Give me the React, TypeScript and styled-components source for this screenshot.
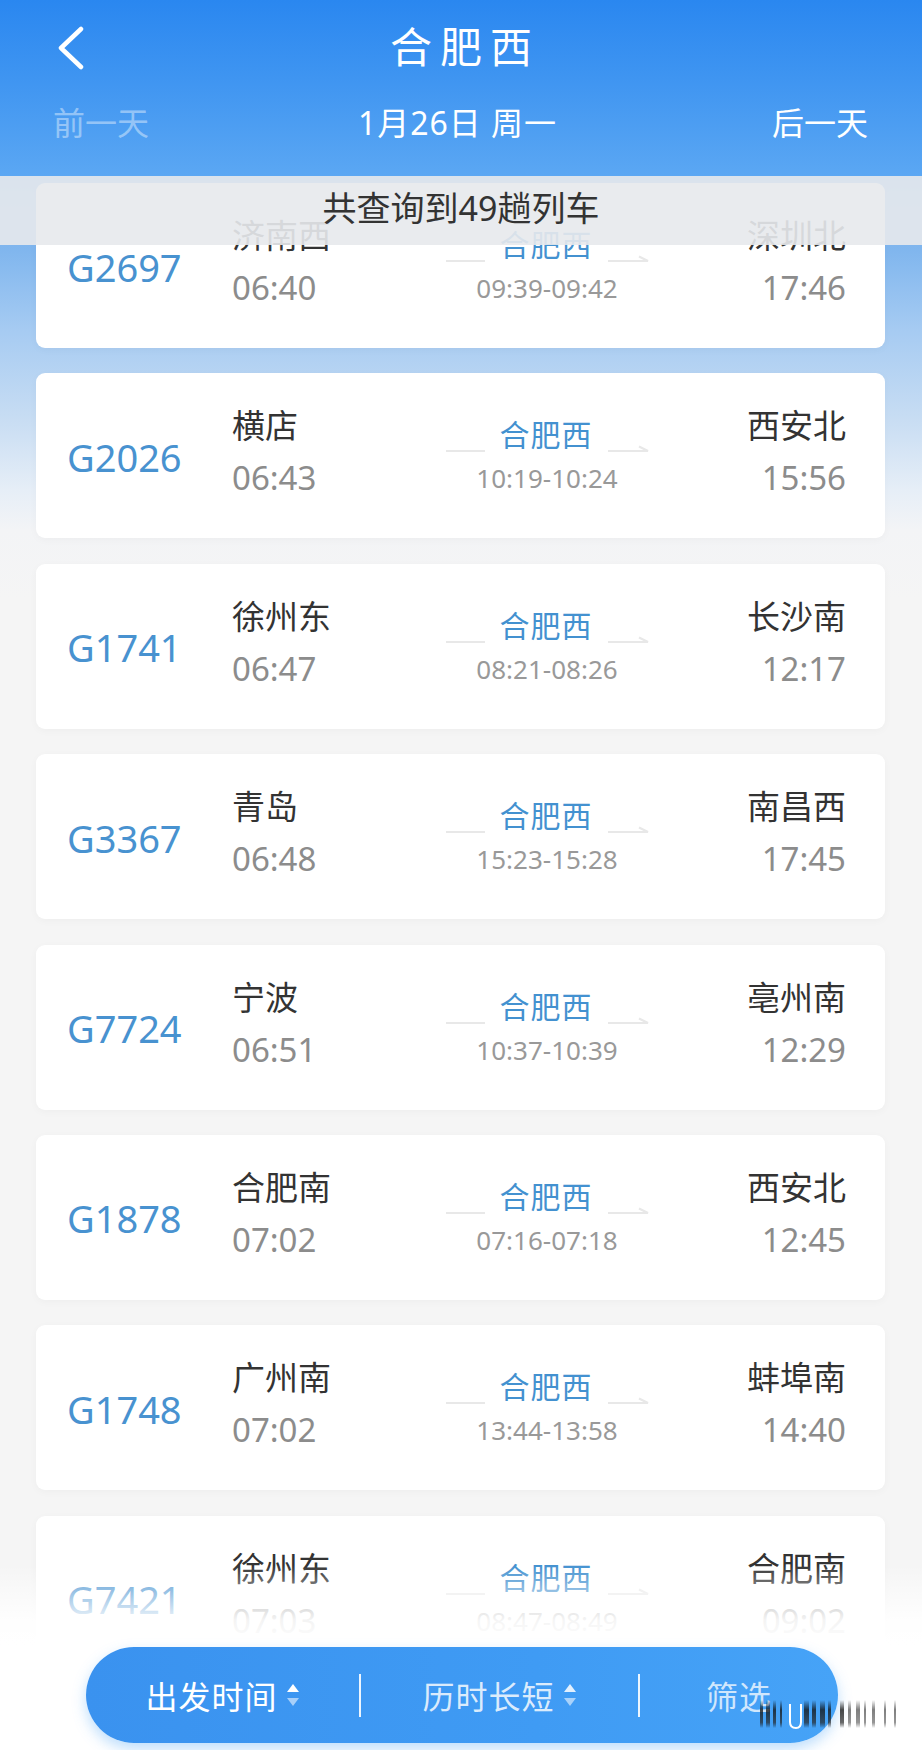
import React from "react";
import styled, { createGlobalStyle } from "styled-components";

const GlobalStyle = createGlobalStyle`
  body {
    margin: 0;
    background: #f5f5f5;
    font-family: "Noto Sans", "Noto Sans CJK SC", sans-serif;
  }
`;

interface Train {
  code: string;
  from: string;
  depart: string;
  stop: string;
  stopTime: string;
  to: string;
  arrive: string;
}

const trains: Train[] = [
  { code: "G2697", from: "济南西", depart: "06:40", stop: "合肥西", stopTime: "09:39-09:42", to: "深圳北", arrive: "17:46" },
  { code: "G2026", from: "横店", depart: "06:43", stop: "合肥西", stopTime: "10:19-10:24", to: "西安北", arrive: "15:56" },
  { code: "G1741", from: "徐州东", depart: "06:47", stop: "合肥西", stopTime: "08:21-08:26", to: "长沙南", arrive: "12:17" },
  { code: "G3367", from: "青岛", depart: "06:48", stop: "合肥西", stopTime: "15:23-15:28", to: "南昌西", arrive: "17:45" },
  { code: "G7724", from: "宁波", depart: "06:51", stop: "合肥西", stopTime: "10:37-10:39", to: "亳州南", arrive: "12:29" },
  { code: "G1878", from: "合肥南", depart: "07:02", stop: "合肥西", stopTime: "07:16-07:18", to: "西安北", arrive: "12:45" },
  { code: "G1748", from: "广州南", depart: "07:02", stop: "合肥西", stopTime: "13:44-13:58", to: "蚌埠南", arrive: "14:40" },
  { code: "G7421", from: "徐州东", depart: "07:03", stop: "合肥西", stopTime: "08:47-08:49", to: "合肥南", arrive: "09:02" },
];

const Page = styled.div`
  position: relative;
  width: 922px;
  height: 1750px;
  overflow: hidden;
  background: linear-gradient(
    180deg,
    #5ba7f3 176px,
    #74aef0 200px,
    #80b6ee 250px,
    #a6cbf2 330px,
    #c8ddf3 420px,
    #e6eef7 490px,
    #f3f4f6 530px,
    #f5f5f5 600px
  );
`;

const Header = styled.header`
  height: 176px;
  background: linear-gradient(180deg, #2a87f0 0%, #3f95f1 45%, #5ba7f3 100%);
  color: #fff;
`;

const TitleBar = styled.div`
  position: relative;
  height: 94px;
  display: flex;
  align-items: center;
  justify-content: center;
`;

const BackButton = styled.button`
  position: absolute;
  left: 56px;
  top: 26px;
  width: 30px;
  height: 44px;
  padding: 0;
  border: none;
  background: none;
  cursor: pointer;
`;

const Title = styled.h1`
  margin: 0;
  font-size: 42px;
  font-weight: 400;
  letter-spacing: 8px;
  padding-left: 8px;
  line-height: 1;
`;

const DateRow = styled.div`
  display: grid;
  grid-template-columns: 1fr auto 1fr;
  align-items: center;
  height: 54px;
  padding: 0 54px 0 53px;
  font-size: 32px;
`;

const DayLink = styled.span<{ $faded?: boolean; $right?: boolean }>`
  justify-self: ${(p) => (p.$right ? "end" : "start")};
  color: ${(p) => (p.$faded ? "rgba(255,255,255,0.42)" : "#fff")};
`;

const CurrentDate = styled.span`
  letter-spacing: 1px;
  margin-right: 6px;
`;

const List = styled.div`
  display: flex;
  flex-direction: column;
  gap: 25.4px;
  padding: 7px 37px 0 36px;
`;

const Card = styled.div`
  flex: none;
  height: 165px;
  display: grid;
  grid-template-columns: 165px 212px 206px 1fr;
  padding: 0 39px 0 31px;
  background: #fff;
  border-radius: 9px;
  box-shadow: 0 2px 8px rgba(0, 0, 0, 0.03);
`;

const Code = styled.div`
  align-self: center;
  font-size: 38px;
  color: #4892d0;
  line-height: 1;
  margin-top: 2px;
`;

const EndPoint = styled.div<{ $right?: boolean }>`
  display: flex;
  flex-direction: column;
  align-items: ${(p) => (p.$right ? "flex-end" : "flex-start")};
  padding-top: 27px;
  white-space: nowrap;
`;

const Station = styled.div`
  font-size: 33px;
  line-height: 52px;
  color: #333;
`;

const Time = styled.div`
  font-size: 33px;
  line-height: 52px;
  color: #8c8c8c;
`;

const Middle = styled.div`
  display: flex;
  flex-direction: column;
  align-items: center;
  padding-top: 42px;
  min-width: 0;
  white-space: nowrap;
`;

const StopRow = styled.div`
  display: flex;
  align-items: flex-end;
  height: 40px;
  gap: 15px;
  & > * {
    flex: none;
  }
`;

const Line = styled.div`
  width: 39px;
  height: 2px;
  margin-bottom: 3px;
  background: #e8e8e8;
`;

const ArrowWrap = styled.svg`
  display: block;
  margin-bottom: 3px;
`;

const StopName = styled.div`
  font-size: 30px;
  line-height: 40px;
  letter-spacing: 1px;
  color: #4391d0;
`;

const StopTime = styled.div`
  margin-top: 3px;
  font-size: 26px;
  line-height: 40px;
  color: #999;
`;

const CountBanner = styled.div`
  position: absolute;
  left: 0;
  right: 0;
  top: 176px;
  height: 69px;
  box-sizing: border-box;
  padding-bottom: 8px;
  display: flex;
  align-items: center;
  justify-content: center;
  background: rgba(231, 233, 236, 0.91);
  font-size: 34px;
  color: #333;
`;

const BottomFade = styled.div`
  position: absolute;
  left: 0;
  right: 0;
  top: 1565px;
  bottom: 0;
  background: linear-gradient(
    180deg,
    rgba(255, 255, 255, 0) 0px,
    rgba(255, 255, 255, 0.9) 55px,
    #fff 80px
  );
`;

const SortBar = styled.nav`
  position: absolute;
  left: 86px;
  right: 84px;
  bottom: 7px;
  height: 96px;
  border-radius: 48px;
  display: grid;
  grid-template-columns: 275px 279px 1fr;
  align-items: center;
  background: linear-gradient(90deg, #3a92ef 0%, #3f9bf4 60%, #46a3f7 100%);
  box-shadow: 0 6px 14px rgba(70, 160, 245, 0.35);
`;

const SortItem = styled.div<{ $dim?: number; $divider?: boolean }>`
  display: flex;
  align-items: center;
  justify-content: center;
  gap: 8px;
  height: 43px;
  font-size: 32px;
  letter-spacing: 1px;
  white-space: nowrap;
  color: rgba(255, 255, 255, ${(p) => p.$dim ?? 1});
  border-right: ${(p) => (p.$divider ? "2px solid rgba(255,255,255,0.9)" : "none")};
`;

const Watermark = styled.svg`
  position: absolute;
  left: 760px;
  top: 1692px;
`;

const SortIcon = ({ dim }: { dim: number }) => (
  <svg width="14" height="24" viewBox="0 0 14 24">
    <path d="M7 1 L13 9 L1 9 Z" fill={`rgba(255,255,255,${dim})`} />
    <path d="M7 23 L13 15 L1 15 Z" fill="rgba(255,255,255,0.55)" />
  </svg>
);

const Arrow = () => (
  <ArrowWrap width="41" height="8" viewBox="0 0 41 8">
    <path d="M0 7 H40 L31 2.5" stroke="#e8e8e8" strokeWidth="2" fill="none" />
  </ArrowWrap>
);

const TrainCard = ({ t }: { t: Train }) => (
  <Card>
    <Code>{t.code}</Code>
    <EndPoint>
      <Station>{t.from}</Station>
      <Time>{t.depart}</Time>
    </EndPoint>
    <Middle>
      <StopRow>
        <Line />
        <StopName>{t.stop}</StopName>
        <Arrow />
      </StopRow>
      <StopTime>{t.stopTime}</StopTime>
    </Middle>
    <EndPoint $right>
      <Station>{t.to}</Station>
      <Time>{t.arrive}</Time>
    </EndPoint>
  </Card>
);

const streaks = [
  [0, 3], [6, 4], [13, 3], [20, 2], [44, 5], [52, 4], [60, 5], [68, 3], [80, 4],
  [88, 3], [96, 4], [104, 2], [112, 3], [124, 2], [134, 2],
];

export default function App() {
  return (
    <Page>
      <GlobalStyle />
      <Header>
        <TitleBar>
          <BackButton aria-label="返回">
            <svg width="30" height="44" viewBox="0 0 30 44">
              <polyline
                points="25,3 5,22 25,41"
                stroke="#fff"
                strokeWidth="4.5"
                fill="none"
                strokeLinecap="round"
                strokeLinejoin="round"
              />
            </svg>
          </BackButton>
          <Title>合肥西</Title>
        </TitleBar>
        <DateRow>
          <DayLink $faded>前一天</DayLink>
          <CurrentDate>1月26日 周一</CurrentDate>
          <DayLink $right>后一天</DayLink>
        </DateRow>
      </Header>

      <List>
        {trains.map((t) => (
          <TrainCard key={t.code} t={t} />
        ))}
      </List>

      <CountBanner>共查询到49趟列车</CountBanner>
      <BottomFade />

      <SortBar>
        <SortItem $divider>
          出发时间
          <SortIcon dim={1} />
        </SortItem>
        <SortItem $dim={0.82} $divider>
          历时长短
          <SortIcon dim={0.85} />
        </SortItem>
        <SortItem $dim={0.75}>筛选</SortItem>
      </SortBar>

      <Watermark width="150" height="40" viewBox="0 0 150 40">
        <defs>
          <linearGradient id="streak" x1="0" y1="0" x2="0" y2="1">
            <stop offset="0" stopColor="#000" stopOpacity="0" />
            <stop offset="0.35" stopColor="#111" stopOpacity="0.9" />
            <stop offset="0.8" stopColor="#222" stopOpacity="0.8" />
            <stop offset="1" stopColor="#000" stopOpacity="0" />
          </linearGradient>
        </defs>
        {streaks.map(([x, w], i) => (
          <rect key={i} x={x} y={8} width={w} height={28} fill="url(#streak)" opacity={i > 8 ? 0.6 : 0.85} />
        ))}
        <path d="M30 12 V30 Q30 36 36 36 Q41 36 41 30 V12" stroke="#fff" strokeWidth="2" fill="none" />
      </Watermark>
    </Page>
  );
}
